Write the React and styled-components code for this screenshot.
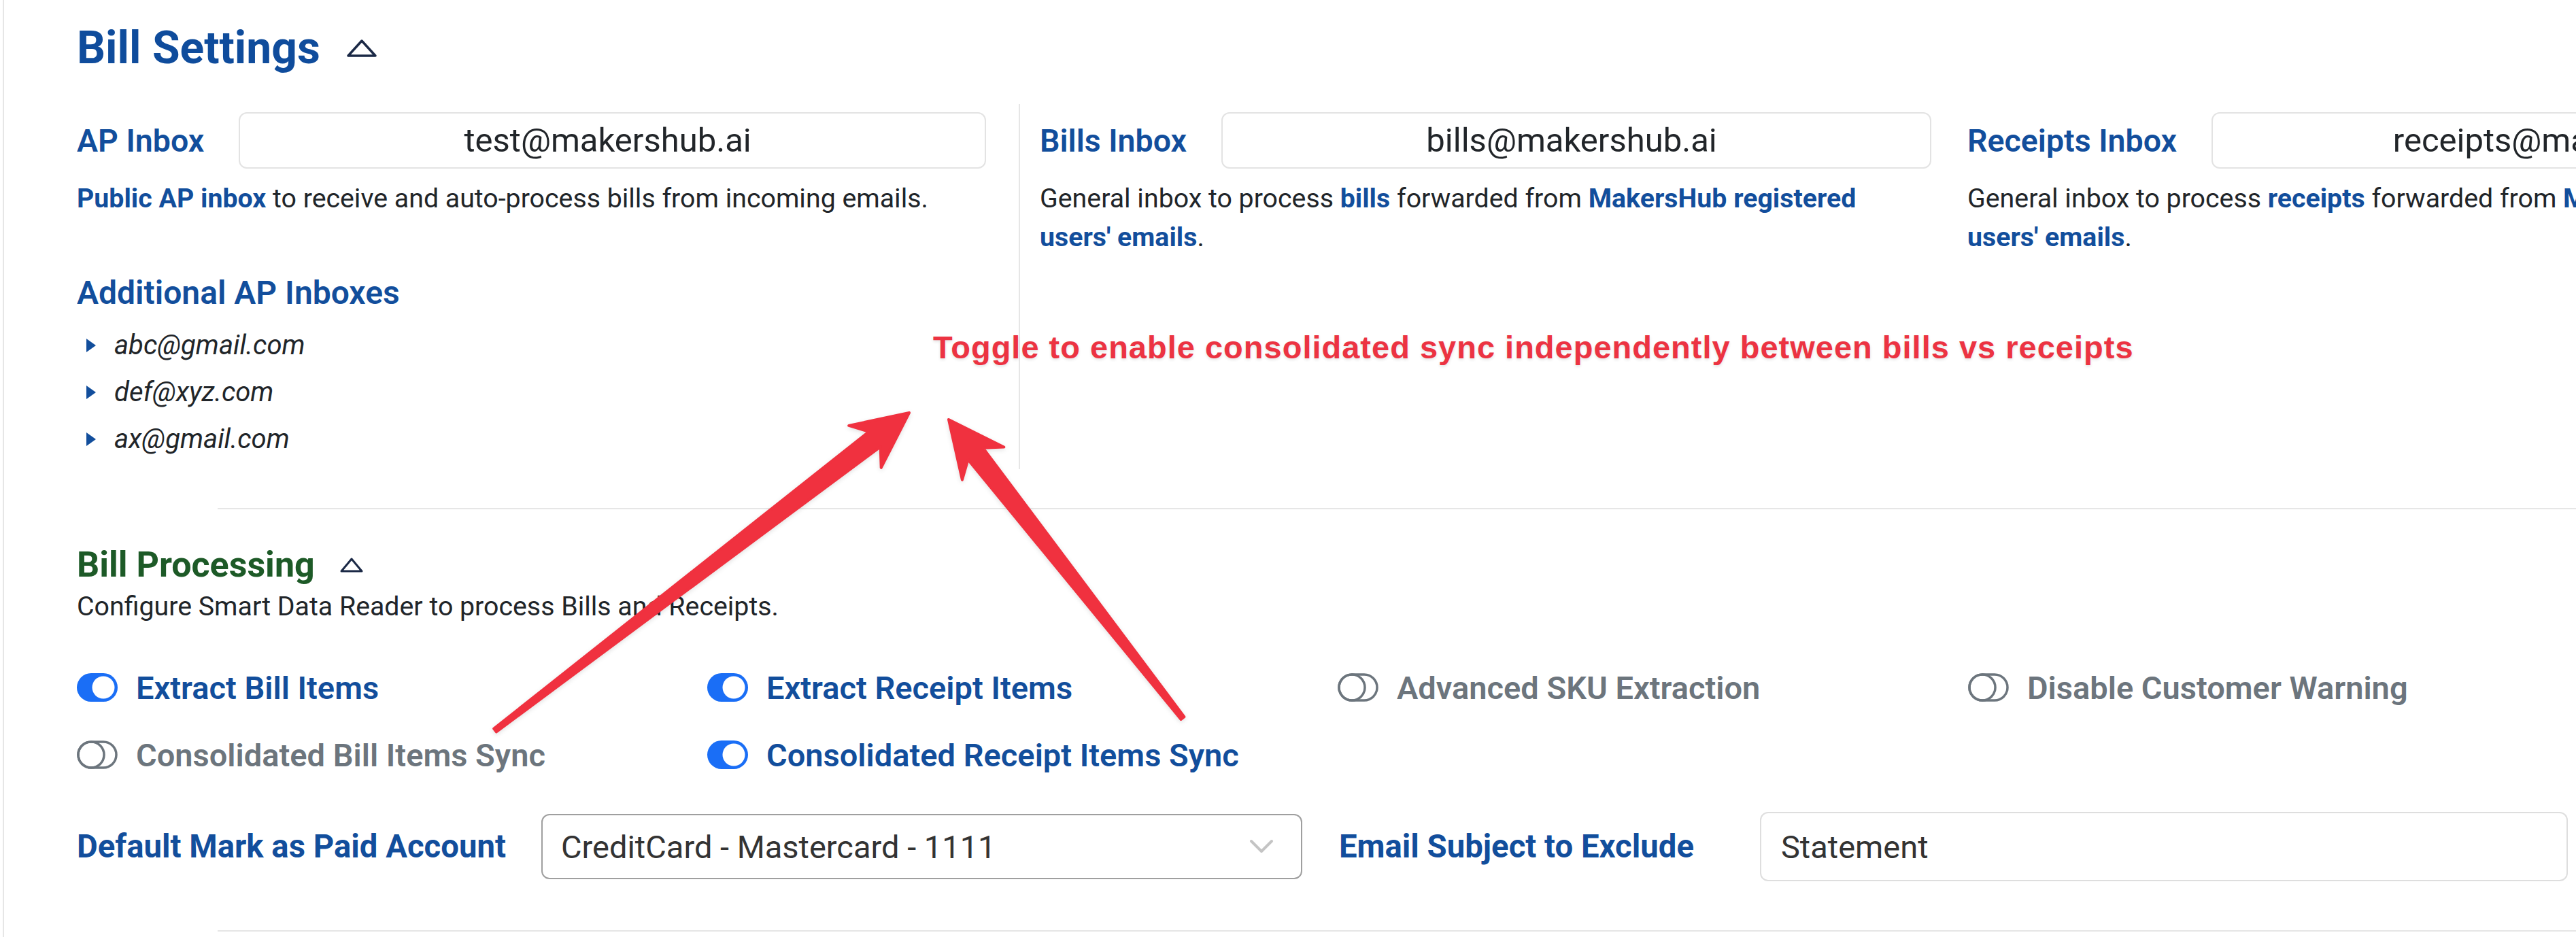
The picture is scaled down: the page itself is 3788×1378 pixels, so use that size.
import React from "react";
import styled, { createGlobalStyle } from "styled-components";

const GlobalStyle = createGlobalStyle`
  html, body {
    margin: 0;
    background: #ffffff;
    overflow: hidden;
  }
  body {
    font-family: Roboto, "Noto Sans", "Liberation Sans", sans-serif;
    color: #212529;
  }
  * {
    box-sizing: border-box;
  }
`;

const inboxes = [
  { label: "AP Inbox", email: "test@makershub.ai" },
  { label: "Bills Inbox", email: "bills@makershub.ai", kind: "bills" },
  { label: "Receipts Inbox", email: "receipts@makershub.ai", kind: "receipts" },
];

const extraInboxes = ["abc@gmail.com", "def@xyz.com", "ax@gmail.com"];

const toggles = [
  { label: "Extract Bill Items", on: true },
  { label: "Extract Receipt Items", on: true },
  { label: "Advanced SKU Extraction", on: false },
  { label: "Disable Customer Warning", on: false },
  { label: "Consolidated Bill Items Sync", on: false },
  { label: "Consolidated Receipt Items Sync", on: true },
];

// skitch-like tapered arrow, tail -> tip
function arrowPoints(x1, y1, x2, y2) {
  const dx = x2 - x1;
  const dy = y2 - y1;
  const len = Math.hypot(dx, dy);
  const ux = dx / len;
  const uy = dy / len;
  const nx = -uy;
  const ny = ux;
  const pts = [
    [0, -3],
    [len - 64, -14],
    [len - 82, -39],
    [len, 0],
    [len - 82, 39],
    [len - 64, 14],
    [0, 3],
  ];
  return pts
    .map(([a, b]) => `${(x1 + ux * a + nx * b).toFixed(1)},${(y1 + uy * a + ny * b).toFixed(1)}`)
    .join(" ");
}

function Caret({ big }) {
  return big ? (
    <svg width="46" height="28" viewBox="0 0 46 28">
      <path d="M23 3 L43 25 H3 Z" fill="none" stroke="#1b2946" strokeWidth="3.5" strokeLinejoin="round" />
    </svg>
  ) : (
    <svg width="36" height="24" viewBox="0 0 36 24">
      <path d="M18 3 L33 21 H3 Z" fill="none" stroke="#1b2946" strokeWidth="3" strokeLinejoin="round" />
    </svg>
  );
}

function Bullet() {
  return (
    <svg width="16" height="22" viewBox="0 0 16 22">
      <path d="M1 1 L15 11 L1 21 Z" fill="#124e9c" />
    </svg>
  );
}

function Chevron() {
  return (
    <svg width="36" height="22" viewBox="0 0 36 22">
      <path d="M3 3 L18 18 L33 3" fill="none" stroke="#c4c4c4" strokeWidth="4" strokeLinecap="round" strokeLinejoin="round" />
    </svg>
  );
}

function Switch({ on }) {
  return on ? (
    <svg width="60" height="42" viewBox="0 0 60 42">
      <rect x="0" y="0" width="60" height="42" rx="21" fill="#1a6ef6" />
      <circle cx="39" cy="21" r="16.5" fill="#ffffff" />
    </svg>
  ) : (
    <svg width="60" height="42" viewBox="0 0 60 42">
      <rect x="2" y="2" width="56" height="38" rx="19" fill="none" stroke="#6c757d" strokeWidth="3.5" />
      <circle cx="21" cy="21" r="19" fill="none" stroke="#6c757d" strokeWidth="3.5" />
    </svg>
  );
}

function App() {
  return (
    <Root>
      <GlobalStyle />
      <Page>
        <TitleRow $gap={38}>
          <Title>Bill Settings</Title>
          <Caret big />
        </TitleRow>

        <InboxGrid>
          {inboxes.map((box, i) => (
            <InboxCol key={box.label} $index={i}>
              <InboxRow>
                <Label>{box.label}</Label>
                <EmailInput readOnly value={box.email} />
              </InboxRow>
              {i === 0 ? (
                <Description>
                  <Strong>Public AP inbox</Strong> to receive and auto-process bills from incoming emails.
                </Description>
              ) : (
                <Description $narrow>
                  General inbox to process <Strong>{box.kind}</Strong> forwarded from{" "}
                  <Strong>MakersHub registered users' emails</Strong>.
                </Description>
              )}
              {i === 0 && (
                <>
                  <SubHeading>Additional AP Inboxes</SubHeading>
                  <InboxList>
                    {extraInboxes.map((mail) => (
                      <InboxItem key={mail}>
                        <Bullet />
                        <span>{mail}</span>
                      </InboxItem>
                    ))}
                  </InboxList>
                </>
              )}
            </InboxCol>
          ))}
        </InboxGrid>

        <Divider />

        <TitleRow $gap={36} $top={53}>
          <ProcessingTitle>Bill Processing</ProcessingTitle>
          <Caret />
        </TitleRow>
        <Intro>Configure Smart Data Reader to process Bills and Receipts.</Intro>

        <ToggleGrid>
          {toggles.map((t) => (
            <ToggleItem key={t.label} $on={t.on}>
              <Switch on={t.on} />
              <span>{t.label}</span>
            </ToggleItem>
          ))}
        </ToggleGrid>

        <FieldRow>
          <FieldLabel>Default Mark as Paid Account</FieldLabel>
          <Select>
            <span>CreditCard - Mastercard - 1111</span>
            <Chevron />
          </Select>
          <FieldLabel $left={54}>Email Subject to Exclude</FieldLabel>
          <TextInput readOnly value="Statement" />
        </FieldRow>

        <Divider $top={72} />
      </Page>

      <Note>Toggle to enable consolidated sync independently between bills vs receipts</Note>
      <ArrowLayer width="3788" height="1378" viewBox="0 0 3788 1378">
        <polygon points={arrowPoints(728, 1074, 1337, 607)} fill="#f0313f" stroke="#f0313f" strokeWidth="4" strokeLinejoin="round" />
        <polygon points={arrowPoints(1739, 1056, 1395, 617)} fill="#f0313f" stroke="#f0313f" strokeWidth="4" strokeLinejoin="round" />
      </ArrowLayer>
    </Root>
  );
}

export default App;

const Root = styled.div`
  position: relative;
  width: 3788px;
  height: 1378px;
  overflow: hidden;
`;

const Page = styled.div`
  width: 4400px;
  min-height: 1378px;
  margin-left: 4px;
  border-left: 2px solid #e6e6e6;
  padding: 33px 0 0 107px;
`;

const TitleRow = styled.div`
  display: flex;
  align-items: center;
  gap: ${(p) => p.$gap}px;
  margin-top: ${(p) => p.$top || 0}px;
`;

const Title = styled.h2`
  margin: 0;
  font-size: 66px;
  line-height: 76px;
  font-weight: 700;
  color: #0f4c9c;
`;

const ProcessingTitle = styled.h3`
  margin: 0;
  font-size: 52px;
  line-height: 58px;
  font-weight: 700;
  color: #1d5a27;
`;

const InboxGrid = styled.div`
  display: grid;
  grid-template-columns: 1387px 1393px 1420px;
  margin-top: 44px;
`;

const colPadding = ["12px 48px 10px 0", "12px 53px 0 29px", "12px 0 0 0"];

const InboxCol = styled.div`
  padding: ${(p) => colPadding[p.$index]};
  border-right: ${(p) => (p.$index === 0 ? "2px solid #e6e6e6" : "none")};
`;

const InboxRow = styled.div`
  display: flex;
  align-items: center;
  gap: 51px;
`;

const Label = styled.div`
  font-size: 46.5px;
  line-height: 56px;
  font-weight: 600;
  color: #124e9c;
  white-space: nowrap;
`;

const EmailInput = styled.input`
  flex: 1;
  min-width: 0;
  height: 83px;
  padding: 0 14px 0 0;
  border: 2px solid #e3e3e3;
  border-radius: 12px;
  background: #fff;
  font-family: inherit;
  font-size: 49px;
  color: #212529;
  text-align: center;
  outline: none;
`;

const Description = styled.p`
  margin: 16px 0 0;
  padding-right: ${(p) => (p.$narrow ? 40 : 0)}px;
  font-size: 39.3px;
  line-height: 57px;
  color: #212529;
`;

const Strong = styled.span`
  font-weight: 700;
  color: #124e9c;
`;

const SubHeading = styled.div`
  margin-top: 82px;
  font-size: 48px;
  line-height: 56px;
  font-weight: 600;
  color: #124e9c;
`;

const InboxList = styled.ul`
  list-style: none;
  margin: 14px 0 0;
  padding: 0 0 0 13px;
`;

const InboxItem = styled.li`
  display: flex;
  align-items: center;
  gap: 26px;
  font-size: 40px;
  line-height: 69px;
  font-style: italic;
  color: #212529;
`;

const Divider = styled.div`
  height: 2px;
  margin: ${(p) => p.$top || 57}px 0 0 207px;
  background: #e6e6e6;
`;

const Intro = styled.p`
  margin: 4px 0 0;
  font-size: 39.3px;
  line-height: 57px;
  color: #212529;
`;

const ToggleGrid = styled.div`
  display: grid;
  grid-template-columns: repeat(4, 927px);
  row-gap: 43px;
  margin-top: 62px;
`;

const ToggleItem = styled.div`
  display: flex;
  align-items: center;
  gap: 27px;
  height: 56px;
  font-size: 47px;
  font-weight: 600;
  color: ${(p) => (p.$on ? "#124e9c" : "#6c757d")};
  white-space: nowrap;
`;

const FieldRow = styled.div`
  display: flex;
  align-items: center;
  margin-top: 56px;
`;

const FieldLabel = styled.div`
  margin-left: ${(p) => p.$left || 0}px;
  font-size: 47.3px;
  font-weight: 700;
  color: #124e9c;
  white-space: nowrap;
`;

const Select = styled.div`
  display: flex;
  align-items: center;
  justify-content: space-between;
  width: 1119px;
  height: 96px;
  margin-left: 52px;
  padding: 0 40px 0 27px;
  border: 2px solid #9f9f9f;
  border-radius: 12px;
  font-size: 47px;
  color: #333;
`;

const TextInput = styled.input`
  width: 1188px;
  height: 102px;
  margin-left: 97px;
  padding: 0 29px;
  border: 2px solid #dedede;
  border-radius: 12px;
  font-family: inherit;
  font-size: 47px;
  color: #333;
  outline: none;
`;

const Note = styled.div`
  position: absolute;
  left: 1372px;
  top: 486px;
  font-family: "Liberation Sans", Arial, sans-serif;
  font-size: 47px;
  line-height: 50px;
  font-weight: 700;
  letter-spacing: 1px;
  color: #ec3342;
  white-space: nowrap;
  text-shadow: 0 2px 4px rgba(0, 0, 0, 0.12);
`;

const ArrowLayer = styled.svg`
  position: absolute;
  left: 0;
  top: 0;
  pointer-events: none;
  filter: drop-shadow(0 2px 3px rgba(0, 0, 0, 0.12));
`;
